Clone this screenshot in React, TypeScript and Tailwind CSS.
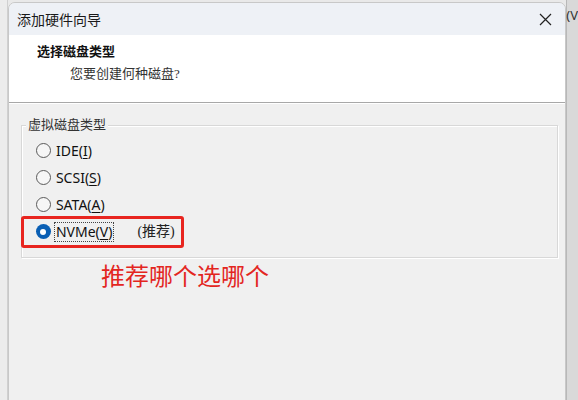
import React from 'react';

const ui = { fontFamily: '"Noto Sans", "Noto Sans CJK SC", sans-serif' };
const cjk = { fontFamily: '"Noto Sans CJK SC", sans-serif' };
const song = { fontFamily: '"Liberation Serif", "Noto Sans CJK SC", serif' };

function Radio({ label, hot, checked, extra }: { label: string; hot: number; checked?: boolean; extra?: string }) {
  const before = label.slice(0, hot);
  const key = label[hot];
  const after = label.slice(hot + 1);
  return (
    <div className="flex items-center h-[27px] pl-[14px]">
      {checked ? (
        <span className="w-[15px] h-[15px] rounded-full bg-[#0a5fb4] flex items-center justify-center">
          <span className="w-[6px] h-[6px] rounded-full bg-white" />
        </span>
      ) : (
        <span className="w-[15px] h-[15px] rounded-full border border-[#5a5a5a] bg-[#f6f6f6]" />
      )}
      <span
        className={`ml-[4px] px-[1px] text-[14px] leading-[18px] text-[#111] ${checked ? 'outline outline-1 outline-dotted outline-[#444]' : ''}`}
        style={ui}
      >
        {before}
        <span className="underline underline-offset-2">{key}</span>
        {after}
      </span>
      {extra && (
        <span className="ml-[24px] text-[14px] text-[#222]" style={song}>
          {extra}
        </span>
      )}
    </div>
  );
}

export default function App() {
  return (
    <div className="relative w-[578px] h-[400px] overflow-hidden bg-[#e9e9e9] flex">
      {/* desktop behind */}
      <div className="w-[8px] h-full bg-[#ececec] border-r border-[#d0d0d0]" />

      {/* wizard window */}
      <div className="mt-[2px] w-[563px] h-[400px] flex flex-col rounded-t-[7px] border border-[#c8c8c8] overflow-hidden bg-[#f0f0f0]">
        {/* title bar */}
        <div className="h-[32px] shrink-0 bg-[#eef1f6] flex items-center justify-between pl-[8px] pr-[12px]">
          <span className="text-[14px] text-[#1a1a1a]" style={cjk}>
            添加硬件向导
          </span>
          <svg width="13" height="13" viewBox="0 0 13 13" className="mr-[1px]">
            <path d="M1 1L12 12M12 1L1 12" stroke="#222" strokeWidth="1.2" />
          </svg>
        </div>

        {/* header */}
        <div className="h-[68px] shrink-0 bg-white border-b border-[#a8a8a8] pl-[28px] pt-[8px]">
          <div className="text-[13px] font-bold text-[#111] leading-[18px]" style={song}>
            选择磁盘类型
          </div>
          <div className="mt-[4px] pl-[33px] text-[13px] text-[#333] leading-[18px]" style={song}>
            您要创建何种磁盘?
          </div>
        </div>

        {/* body */}
        <div className="flex-1 pt-[21px] pl-[12px] pr-[12px] border-t border-white">
          <div className="relative h-[133px] w-[537px] border border-[#d8d8d8] shadow-[inset_1px_1px_0_#fff,1px_1px_0_#fff] pt-[11px]">
            <span
              className="absolute -top-[10px] left-[4px] px-[2px] bg-[#f0f0f0] text-[13px] leading-[18px] text-[#333]"
              style={song}
            >
              虚拟磁盘类型
            </span>
            <Radio label="IDE(I)" hot={4} />
            <Radio label="SCSI(S)" hot={5} />
            <Radio label="SATA(A)" hot={5} />
            <Radio label="NVMe(V)" hot={5} checked extra="(推荐)" />
          </div>

          <div className="mt-[2px] pl-[80px] text-[24px] leading-[30px] text-[#e3261f]" style={cjk}>
            推荐哪个选哪个
          </div>
        </div>
      </div>

      {/* neighbouring window edge */}
      <div className="flex-1 h-full bg-[#d9d9d9] border-l border-[#b8b8b8] flex flex-col">
        <span className="text-[13px] text-[#333] -ml-[1px] mt-[6px]" style={ui}>
          (V
        </span>
      </div>

      {/* annotation box */}
      <div className="absolute left-[21px] top-[216px] w-[163px] h-[32px] border-[3px] border-[#e8251f] rounded-[3px]" />
    </div>
  );
}
